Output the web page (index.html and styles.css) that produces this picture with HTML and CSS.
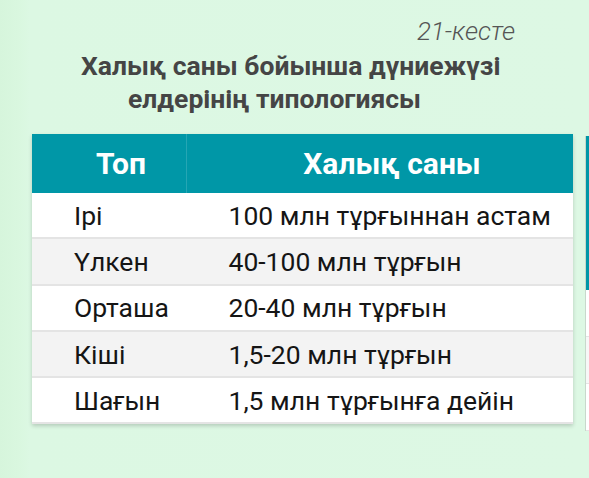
FILE: index.html
```html
<!DOCTYPE html>
<html>
<head>
<meta charset="utf-8">
<link rel="stylesheet" href="styles.css">
</head>
<body>
<div class="page">
  <div class="main">
    <div class="caption">21-кесте</div>
    <h1 class="title">
      <span class="line1">Халық саны бойынша дүниежүзі</span>
      <span class="line2">елдерінің типологиясы</span>
    </h1>
    <table class="tbl">
      <thead>
        <tr><th class="c1">Топ</th><th class="c2">Халық саны</th></tr>
      </thead>
      <tbody>
        <tr><td>Ірі</td><td>100 млн тұрғыннан астам</td></tr>
        <tr><td>Үлкен</td><td>40-100 млн тұрғын</td></tr>
        <tr><td>Орташа</td><td>20-40 млн тұрғын</td></tr>
        <tr><td>Кіші</td><td>1,5-20 млн тұрғын</td></tr>
        <tr><td>Шағын</td><td>1,5 млн тұрғынға дейін</td></tr>
      </tbody>
    </table>
  </div>
  <div class="peek">
    <div class="peek-head"></div>
    <div class="peek-row"></div>
    <div class="peek-row"></div>
    <div class="peek-row"></div>
  </div>
</div>
</body>
</html>
```
FILE: styles.css
```css
html, body {
  margin: 0;
  padding: 0;
}
body {
  width: 589px;
  height: 478px;
  overflow: hidden;
  background: linear-gradient(to right, #d6f5dc 0px, #d9f7df 18px, #dcf8e3 30px, #ddf8e4 100%);
  font-family: Roboto, "Noto Sans", sans-serif;
}
.page {
  display: flex;
  align-items: flex-start;
}
.main {
  width: 541px;
  margin-left: 32px;
  flex: none;
}
.caption {
  font-style: italic;
  font-size: 26px;
  color: #555;
  text-align: right;
  padding-right: 58px;
  padding-top: 16px;
  line-height: 30px;
  font-weight: 300;
}
.title {
  margin: 0;
  font-size: 26.5px;
  font-weight: 700;
  color: #454545;
  line-height: 33px;
  padding-top: 3px;
}
.title span { display: block; }
.line1 { padding-left: 49px; }
.line2 { padding-left: 96px; }
.tbl {
  margin-top: 19px;
  width: 541px;
  border-collapse: collapse;
  background: #fff;
  box-shadow: 0 2px 4px rgba(0,0,0,0.18);
}
.tbl th {
  background: #0097a7;
  color: #fff;
  font-size: 30px;
  font-weight: 700;
  height: 59px;
  padding: 0 0 0 24px;
  text-align: center;
}
.tbl th.c1 {
  width: 130px;
  border-right: 1px solid #25a6b4;
}
.tbl td {
  font-size: 26.5px;
  color: #151515;
  height: 44.3px;
  padding: 0 0 0 42px;
  border-bottom: 2px solid #e4e4e4;
}
.tbl tbody tr:nth-child(even) td {
  background: #f3f3f3;
}
.peek {
  margin-left: 12px;
  margin-top: 136px;
  width: 20px;
  flex: none;
  border-left: 1px solid #c8d8cc;
}
.peek-head {
  height: 154px;
  background: #0097a7;
}
.peek-row {
  height: 46px;
  background: #fff;
  border-bottom: 1px solid #e4e4e4;
}
.peek-row:nth-child(3) { background: #f7f7f7; }
```
